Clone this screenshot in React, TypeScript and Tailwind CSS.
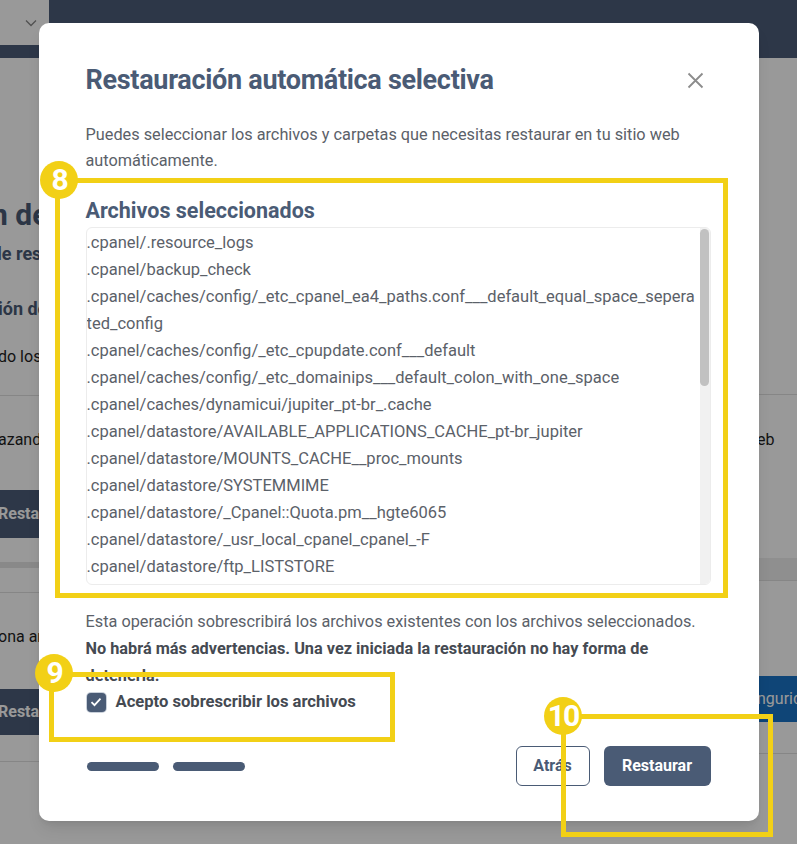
import React from "react";

const files = [
  ".cpanel/.resource_logs",
  ".cpanel/backup_check",
  ".cpanel/caches/config/_etc_cpanel_ea4_paths.conf___default_equal_space_sepera",
  "ted_config",
  ".cpanel/caches/config/_etc_cpupdate.conf___default",
  ".cpanel/caches/config/_etc_domainips___default_colon_with_one_space",
  ".cpanel/caches/dynamicui/jupiter_pt-br_.cache",
  ".cpanel/datastore/AVAILABLE_APPLICATIONS_CACHE_pt-br_jupiter",
  ".cpanel/datastore/MOUNTS_CACHE__proc_mounts",
  ".cpanel/datastore/SYSTEMMIME",
  ".cpanel/datastore/_Cpanel::Quota.pm__hgte6065",
  ".cpanel/datastore/_usr_local_cpanel_cpanel_-F",
  ".cpanel/datastore/ftp_LISTSTORE",
  ".cpanel/datastore/php_version_cache",
];

function Background() {
  return (
    <div className="w-[797px] h-[844px] bg-white overflow-hidden">
      <div className="h-[58px] bg-[#4b5c78] flex items-start">
        <div className="w-[49px] h-[45px] bg-white rounded-br-lg flex items-center justify-end pr-[12px]">
          <svg width="12" height="8" viewBox="0 0 12 8" fill="none">
            <path d="M1 1.5l5 5 5-5" stroke="#888" strokeWidth="1.3" />
          </svg>
        </div>
      </div>
      <div className="flex justify-between">
        <div className="w-[60px] overflow-hidden whitespace-nowrap text-[#4a5b75]">
          <div className="mt-[133px] -ml-[9px] text-[30px] font-bold leading-[48px]">n de restauración</div>
          <div className="mt-[3px] -ml-[3px] text-[18px] font-bold leading-[24px]">le restauración</div>
          <div className="mt-[31px] -ml-[2px] text-[18px] font-bold leading-[24px]">ión de</div>
          <div className="mt-[24px] -ml-[2px] text-[16px] leading-[24px] text-[#1e1e1e]">do los archivos</div>
          <div className="mt-[26px] h-px bg-[#e0e0e0]" />
          <div className="mt-[32px] -ml-[2px] text-[16px] leading-[24px] text-[#1e1e1e]">azando</div>
          <div className="mt-[38px] h-[48px] bg-[#4b5c78] text-white font-bold text-[16px] flex items-center -ml-[2px]">Restaurar</div>
          <div className="mt-[24px] h-[6px] bg-[#e4e4e4]" />
          <div className="mt-[24px] h-px bg-[#e0e0e0]" />
          <div className="mt-[32px] -ml-[2px] text-[16px] leading-[24px] text-[#1e1e1e]">ona archivos</div>
          <div className="mt-[40px] h-[46px] bg-[#4b5c78] text-white font-bold text-[16px] flex items-center -ml-[2px]">Restaurar</div>
          <div className="mt-[26px] h-px bg-[#e0e0e0]" />
        </div>
        <div className="w-[40px] overflow-hidden whitespace-nowrap flex flex-col items-end">
          <div className="mt-[336px] w-full h-px bg-[#e0e0e0]" />
          <div className="mt-[33px] text-[16px] leading-[24px] text-[#1e1e1e] w-full">eb</div>
          <div className="mt-[106px] w-full h-[22px] bg-[#eeeeee]" />
          <div className="w-full h-px bg-[#e0e0e0]" />
          <div className="mt-[95px] w-full h-[46px] bg-[#1a73c6] text-white text-[16px] flex items-center">nguridad</div>
          <div className="mt-[31px] w-full h-px bg-[#e0e0e0]" />
        </div>
      </div>
    </div>
  );
}

function Badge({ n }: { n: string }) {
  return (
    <div className="w-[38px] h-[38px] rounded-full bg-[#f2d016] flex items-center justify-center text-white font-bold text-[30px] leading-none tracking-[-2px]">
      {n}
    </div>
  );
}

export default function App() {
  return (
    <div className="relative w-[797px] h-[844px] overflow-hidden font-['Roboto',sans-serif]">
      <Background />
      <div className="absolute inset-0 bg-black/40 flex items-center justify-center">
        <div className="w-[720px] h-[798px] bg-white rounded-[10px] pl-[47px] pr-12 pt-[39px] pb-[35px] flex flex-col shadow-lg">
          <div className="flex items-center justify-between h-[36px]">
            <h1 className="text-[27px] font-bold leading-[36px] text-[#4a5b75] tracking-[-0.3px]">
              Restauración automática selectiva
            </h1>
            <button className="w-[20px] h-[20px] mr-[5px] flex items-center justify-center">
              <svg width="17" height="17" viewBox="0 0 17 17" fill="none">
                <path d="M1.5 1.5l14 14M15.5 1.5l-14 14" stroke="#8c8c8c" strokeWidth="1.8" />
              </svg>
            </button>
          </div>
          <p className="mt-[24px] text-[16.3px] leading-[26px] text-[#5b6169]">
            Puedes seleccionar los archivos y carpetas que necesitas restaurar en tu sitio web automáticamente.
          </p>
          <h2 className="mt-[23px] text-[21.5px] font-bold leading-[28px] text-[#4a5b75]">Archivos seleccionados</h2>
          <div className="mt-[2px] h-[358px] border border-[#ececec] rounded-md flex overflow-hidden">
            <div className="flex-1 overflow-hidden whitespace-nowrap text-[16.5px] leading-[27px] text-[#5b6169] pt-[1px]">
              {files.map((f, i) => (
                <div key={i}>{f}</div>
              ))}
            </div>
            <div className="w-[10px] bg-[#f1f1f1] flex flex-col pt-[1px]">
              <div className="h-[157px] w-[9px] rounded-full bg-[#c1c1c1]" />
            </div>
          </div>
          <div className="mt-[23px] text-[16.3px] leading-[27px]">
            <p className="text-[#5b6169]">Esta operación sobrescribirá los archivos existentes con los archivos seleccionados.</p>
            <p className="font-bold text-[#454a52]">
              No habrá más advertencias. Una vez iniciada la restauración no hay forma de detenerla.
            </p>
          </div>
          <label className="mt-[1px] flex items-center gap-[10px] h-[24px]">
            <span className="ml-[1px] w-[19px] h-[19px] rounded-[4px] bg-[#4a5b75] ring-1 ring-[#c9d0da] flex items-center justify-center">
              <svg width="12" height="10" viewBox="0 0 12 10" fill="none">
                <path d="M1.5 5.2l3 3 6-6.5" stroke="#fff" strokeWidth="1.8" />
              </svg>
            </span>
            <span className="text-[16.6px] font-bold text-[#454a52]">Acepto sobrescribir los archivos</span>
          </label>
          <div className="mt-auto flex items-center justify-between">
            <div className="flex gap-[14px] ml-[1px]">
              <div className="w-[72px] h-[9px] rounded-full bg-[#4a5b75]" />
              <div className="w-[72px] h-[9px] rounded-full bg-[#4a5b75]" />
            </div>
            <div className="flex gap-[14px]">
              <button className="h-[40px] w-[74px] rounded-md border border-[#4a5b75] text-[#4a5b75] font-bold text-[16px]">Atrás</button>
              <button className="h-[40px] w-[107px] rounded-md bg-[#4a5b75] text-white font-bold text-[16px]">Restaurar</button>
            </div>
          </div>
        </div>
      </div>
      {/* annotations */}
      <div className="absolute left-[55px] top-[178px] w-[673px] h-[420px] border-[5px] border-[#f2d016]" />
      <div className="absolute left-[40px] top-[161px]"><Badge n="8" /></div>
      <div className="absolute left-[49px] top-[672px] w-[346px] h-[70px] border-[5px] border-[#f2d016]" />
      <div className="absolute left-[35px] top-[654px]"><Badge n="9" /></div>
      <div className="absolute left-[561px] top-[714px] w-[212px] h-[123px] border-[5px] border-[#f2d016]" />
      <div className="absolute left-[544px] top-[697px]"><Badge n="10" /></div>
    </div>
  );
}
